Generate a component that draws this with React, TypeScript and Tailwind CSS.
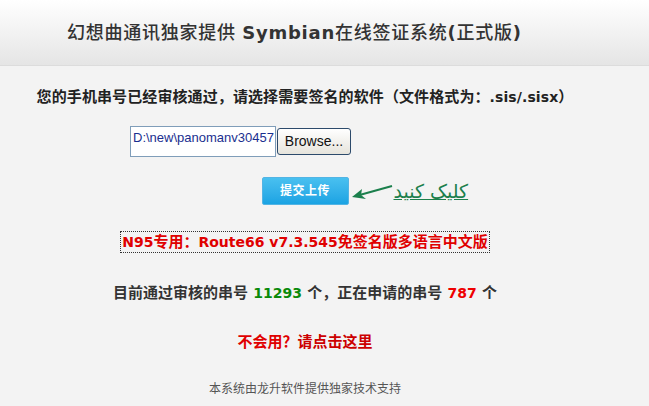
import React from 'react';

const CJK = '"DejaVu Sans", "Noto Sans CJK SC", sans-serif';

export default function App() {
  return (
    <div className="w-[649px] h-[406px] overflow-hidden bg-[#f3f3f3] text-[#333]" style={{ fontFamily: CJK }}>
      {/* Header */}
      <div className="h-[66px] bg-gradient-to-b from-[#ffffff] to-[#e5e5e5] border-b border-[#dcdcdc] flex items-center pl-[67px]">
        <h1 className="text-[18px] leading-none text-[#333] tracking-[0.75px]">
          <span className="font-medium">幻想曲通讯独家提供 </span>
          <span className="font-bold">Symbian</span>
          <span className="font-medium">在线签证系统</span>
          <span className="font-bold">(</span>
          <span className="font-medium">正式版</span>
          <span className="font-bold">)</span>
        </h1>
      </div>

      <div className="w-[610px] flex flex-col items-center">
        <p className="mt-[21px] text-[15px] font-bold leading-[20px] text-[#222] tracking-[0.1px]">
          您的手机串号已经审核通过，请选择需要签名的软件（文件格式为：<span className="text-[14px]">.sis/.sisx</span>）
        </p>

        {/* File picker */}
        <div className="self-start ml-[130px] mt-[19px] flex items-center">
          <div className="w-[146px] h-[31px] bg-white border border-[#7f9db9] flex items-start pt-[4px] pl-[2px] overflow-hidden">
            <span className="text-[13px] leading-none text-[#1a2f8f] whitespace-nowrap" style={{ fontFamily: '"Liberation Sans", sans-serif' }}>
              D:\new\panomanv30457
            </span>
          </div>
          <button className="ml-[1px] w-[74px] h-[27px] rounded-[3px] border border-[#2c4a6b] bg-gradient-to-b from-[#ffffff] to-[#e6e4dc] text-[14px] text-[#111]" style={{ fontFamily: '"Liberation Sans", sans-serif' }}>
            Browse...
          </button>
        </div>

        {/* Submit */}
        <div className="relative mt-[20px]">
          <button className="w-[87px] h-[28px] rounded-[2px] border border-[#52b4e4] bg-gradient-to-b from-[#48c0f0] to-[#1aa3e3] text-white text-[12px] font-bold tracking-[0.5px]">
            提交上传
          </button>
          <div className="absolute left-[88px] top-[5px] flex items-start">
            <svg width="44" height="16" viewBox="0 0 44 16" className="mt-[2px]">
              <line x1="42" y1="2" x2="6" y2="12" stroke="#1b7f4c" strokeWidth="2" />
              <polygon points="2,13 12,5 11,11 16,15" fill="#1b7f4c" />
            </svg>
            <span dir="rtl" className="text-[19px] leading-none text-[#1b7f4c] underline underline-offset-[1px] whitespace-nowrap" style={{ fontFamily: '"DejaVu Sans", sans-serif' }}>
              کلیک کنید
            </span>
          </div>
        </div>

        <div className="mt-[26px] border border-dotted border-[#333] px-[1px] h-[22px] flex items-center">
          <span className="text-[15px] font-bold text-[#e00000] leading-none">
            <span className="text-[14px]">N95</span>专用：<span className="text-[14px]">Route66 v7.3.545</span>免签名版多语言中文版
          </span>
        </div>

        <p className="mt-[30px] text-[15px] font-bold leading-[20px] text-[#333]">
          目前通过审核的串号 <span className="text-[#0a8a0a] text-[14px]">11293</span> 个，正在申请的串号 <span className="text-[#ee0000] text-[14px]">787</span> 个
        </p>

        <p className="mt-[29px] text-[15px] font-bold leading-[20px]">
          <span className="text-[#e00000]">不会用？</span>
          <span className="text-[#cc0000]">请点击这里</span>
        </p>

        <p className="mt-[29px] text-[12px] leading-[16px] text-[#555]">本系统由龙升软件提供独家技术支持</p>
      </div>
    </div>
  );
}
